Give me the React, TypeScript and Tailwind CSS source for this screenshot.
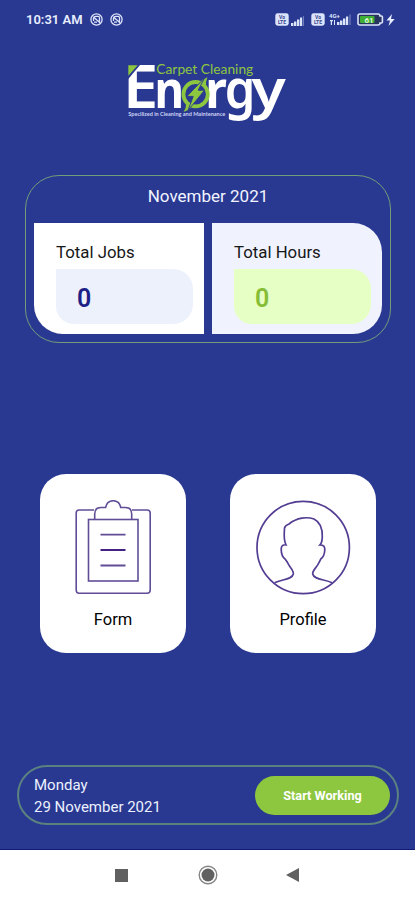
import React from "react";

const Swirl = () => (
  <svg className="h-[13px] w-[13px]" viewBox="0 0 13 13" fill="none" stroke="#dce4fb">
    <circle cx="6.5" cy="6.5" r="5.6" strokeWidth="1.3" />
    <path d="M3.5 8V5.2Q3.7 3.3 6 3.3H8.4Q9.6 3.6 9.5 5V9.3L4.3 4.7M4 9.2H7" strokeWidth="1.3" />
  </svg>
);

const Signal = () => (
  <svg className="h-[10px] w-[13px]" viewBox="0 0 13 10" fill="#dce4fb">
    <path d="M0 7h2.4v3H0zM3 5.5h2.4V10H3zM6 3.5h2.4V10H6zM9 1.5h2.2V10H9z" />
    <path d="M12 0h1v10h-1z" opacity=".4" />
  </svg>
);

const Sim = () => (
  <svg className="h-[13px] w-[14px] overflow-visible" viewBox="0 0 14 13">
    <rect x=".3" y=".3" width="13.4" height="12.4" rx="2.4" fill="#dce4fb" />
    <g fill="#39458f" fontFamily="Roboto, sans-serif" fontWeight="700" fontSize="5" textAnchor="middle">
      <text x="7" y="5.6">Vo</text>
      <text x="7" y="11.2">LTE</text>
    </g>
  </svg>
);

const StatusBar = () => (
  <header className="flex h-[39px] items-center pl-[26px] pr-[20px] text-[#e8edff]">
    <span className="w-[64px] whitespace-nowrap text-[13px] font-semibold leading-[14px]">10:31 AM</span>
    <div className="flex gap-[6.5px]"><Swirl /><Swirl /></div>
    <div className="ml-auto flex items-center">
      <Sim />
      <div className="ml-[2px] mt-[3px]"><Signal /></div>
      <div className="ml-[7px]"><Sim /></div>
      <svg className="ml-[4px] h-[13px] w-[23px] overflow-visible" viewBox="0 0 23 13" fill="#dce4fb">
        <text x="0" y="4.6" fontFamily="Roboto, sans-serif" fontWeight="700" fontSize="6">4G+</text>
        <path d="M1 7h3v1.3H3V12H1.8V8.3H1zM5 7h1v5H5zM8 9h2.4v3H8zM11 7.5h2.4V12H11zM14 5.5h2.4V12H14zM17 3.5h2.2V12H17z" />
        <path d="M20.5 1.5h1V12h-1z" opacity=".5" />
      </svg>
      <svg className="ml-[5px] h-[13px] w-[27px]" viewBox="0 0 27 13">
        <path d="M3 1h18q2 0 2 2h1.4q1 0 1 1v5q0 1-1 1H23q0 2-2 2H3q-2 0-2-2V3q0-2 2-2z" fill="#26345f" stroke="#dce4fb" strokeWidth="1.6" />
        <rect x="3" y="3" width="14.5" height="7" rx="1" fill="#3fae35" />
        <text x="12" y="9.5" textAnchor="middle" fill="#dffbd7" fontFamily="Roboto, sans-serif" fontWeight="700" fontSize="8">61</text>
      </svg>
      <svg className="ml-[2px] h-[12px] w-[9px]" viewBox="0 0 9 12" fill="#e8edff"><path d="M6 0 .5 6.5H4L2.5 12 8.7 5H5z" /></svg>
    </div>
  </header>
);

const Logo = () => (
  <svg className="mx-auto mt-[23px] h-[66px] w-[165px] overflow-visible" viewBox="125 62 165 66">
    <g fill="white" fontFamily="Noto Sans, sans-serif" fontWeight="600" fontSize="59">
      <text transform="translate(122.8 108.3) scale(1.08 1)">E</text>
      <text transform="translate(154.6 108.3) scale(.77 .88)" fontWeight="700">n</text>
      <text transform="translate(205.3 108.3) scale(.82 .88)" fontWeight="700">r</text>
      <text transform="translate(224.8 108.3) scale(.83 .93)">g</text>
      <text transform="translate(251.5 108.3) scale(1.06 .93)">y</text>
    </g>
    <path d="M127 63.5h14.3L127 80.6z" fill="#293991" />
    <path d="M128.3 65.2h9.4l-9.4 10.5z" fill="#8dc63f" />
    <circle cx="195.6" cy="94.2" r="12.2" fill="none" stroke="#8dc63f" strokeWidth="3.8" />
    <path d="M207.4 77.3C204 79 201.6 80.2 199.5 82.4L206 87.3Q205.4 82 207.4 77.3zM183.6 112q4.4-1.2 8-4.8l-5.5-3.8q.2 5-2.5 8.6z" fill="#8dc63f" />
    <path d="M204.5 78 186.8 96.4h6.4l-5.2 14 16.6-20.2h-6.4z" fill="#8dc63f" stroke="#293991" strokeWidth=".9" />
    <text x="156.3" y="73.9" textLength="97" lengthAdjust="spacingAndGlyphs" fill="#8dc63f" fontFamily="Lato, sans-serif" fontSize="12.6">Carpet Cleaning</text>
    <text x="128.3" y="116.4" textLength="97" lengthAdjust="spacingAndGlyphs" fill="#cbd2f4" fontFamily="Lato, sans-serif" fontWeight="700" fontSize="4.8">Specilized in Cleaning and Maintenance</text>
  </svg>
);

const Clipboard = () => (
  <svg className="h-[95px] w-[77px]" viewBox="0 0 77 95" fill="none" stroke="#614d97" strokeWidth="1.6">
    <path d="M19 10H4Q1.2 10 1.2 13V90Q1.2 93.3 4.2 93.3H72Q75.2 93.3 75.2 90V13Q75.2 10 72 10H57" />
    <rect x="13.5" y="19.5" width="49.5" height="61.5" />
    <path d="M19.7 19.5V14Q19.7 7.5 26 7.5H30.6C32.5-1.5 43.8-1.5 45.8 7.5H50.5Q56.7 7.5 56.7 14V19.5" />
    <path d="M25.5 34.6h25M25.5 65.5h25" strokeWidth="1.8" />
    <path d="M25.5 50h25" stroke="#432283" strokeWidth="2" />
  </svg>
);

const Person = () => (
  <svg className="h-[95px] w-[95px]" viewBox="0 0 95 95" fill="none" stroke="#533d92" strokeWidth="1.7">
    <circle cx="47.2" cy="47.5" r="46.2" />
    <path d="M18.6 82.8C25 79.2 36 80 37.3 74C38 70 33.5 67.5 31.5 62.5L29.5 59.5C26.5 57.5 25.2 52.5 25.2 49C25.2 46 27 44.5 30 44.8C27 39 28.5 32 28.5 28Q29 25.5 33 24C41 17.5 51 16.6 58 19C66 23 66.5 31 66.3 37C66 41 66 43 64 44.8C67.5 44.8 69 46.5 68.8 50C68.5 54 67 57.5 65 58.7L63 62.5C61 67.5 56.3 70 56.7 74C58 80 69 79.2 76 82.8" />
  </svg>
);

const Stat = ({ label, card, box }: { label: string; card: string; box: string }) => (
  <div className={`h-[111px] w-[170px] pl-[22px] pr-[11px] pt-[19px] ${card}`}>
    <p className="text-[16.8px] leading-[20px] text-[#171717]">{label}</p>
    <div className={`mt-[7px] flex h-[55px] items-center rounded-r-[20px] rounded-bl-[18px] pl-[21px] text-[25px] font-semibold ${box}`}>
      <span className="mt-[4px]">0</span>
    </div>
  </div>
);

const Tile = ({ label, children }: { label: string; children: React.ReactNode }) => (
  <button className="flex h-[179px] w-[146px] flex-col items-center rounded-[26px] bg-white pt-[26px] text-[16.5px] leading-[20px] text-black">
    {children}
    <span className="mt-[15px]">{label}</span>
  </button>
);

export default function App() {
  return (
    <div className="flex h-[900px] w-[415px] flex-col overflow-hidden bg-[#293991] font-['Roboto',sans-serif]">
      <StatusBar />
      <Logo />
      <section className="ml-[25px] mt-[47px] h-[168px] w-[366px] rounded-[34px] border border-[#719d78]">
        <h1 className="pt-[10px] text-center text-[17px] leading-[20px] text-[#f1f4ff]">November 2021</h1>
        <div className="mt-[17px] flex justify-between px-[8px]">
          <Stat label="Total Jobs" card="rounded-bl-[29px] bg-white" box="bg-[#edf1fc] text-[#1d1f87]" />
          <Stat label="Total Hours" card="rounded-r-[29px] bg-[#f0f2fd]" box="bg-[#e6ffc4] text-[#86bd36]" />
        </div>
      </section>
      <section className="mt-[131px] flex gap-[44px] pl-[40px]">
        <Tile label="Form"><Clipboard /></Tile>
        <Tile label="Profile"><Person /></Tile>
      </section>
      <section className="ml-[17px] mt-[112px] flex h-[60px] w-[382px] items-center justify-between rounded-[30px] border-2 border-[#5c8280] pl-[15px] pr-[7px]">
        <p className="pt-[2px] text-[15px] leading-[22.5px] text-[#edf1ff]">Monday<br />29 November 2021</p>
        <button className="h-[39px] w-[135px] rounded-full bg-[#8dc63f] pt-[1px] text-[12.7px] font-bold text-white">Start Working</button>
      </section>
      <nav className="mt-auto flex h-[51px] items-center border-t border-[#101b77] bg-white pl-[115px]">
        <div className="h-[13px] w-[13px] bg-[#606060]" />
        <svg className="ml-[70px] h-[20px] w-[20px]" viewBox="0 0 20 20"><circle cx="10" cy="10" r="8.8" fill="none" stroke="#858585" strokeWidth="1.4" /><circle cx="10" cy="10" r="6.5" fill="#606060" /></svg>
        <svg className="ml-[68px] h-[14px] w-[13px]" viewBox="0 0 13 14"><path d="M13 0v14L0 7z" fill="#606060" /></svg>
      </nav>
    </div>
  );
}
